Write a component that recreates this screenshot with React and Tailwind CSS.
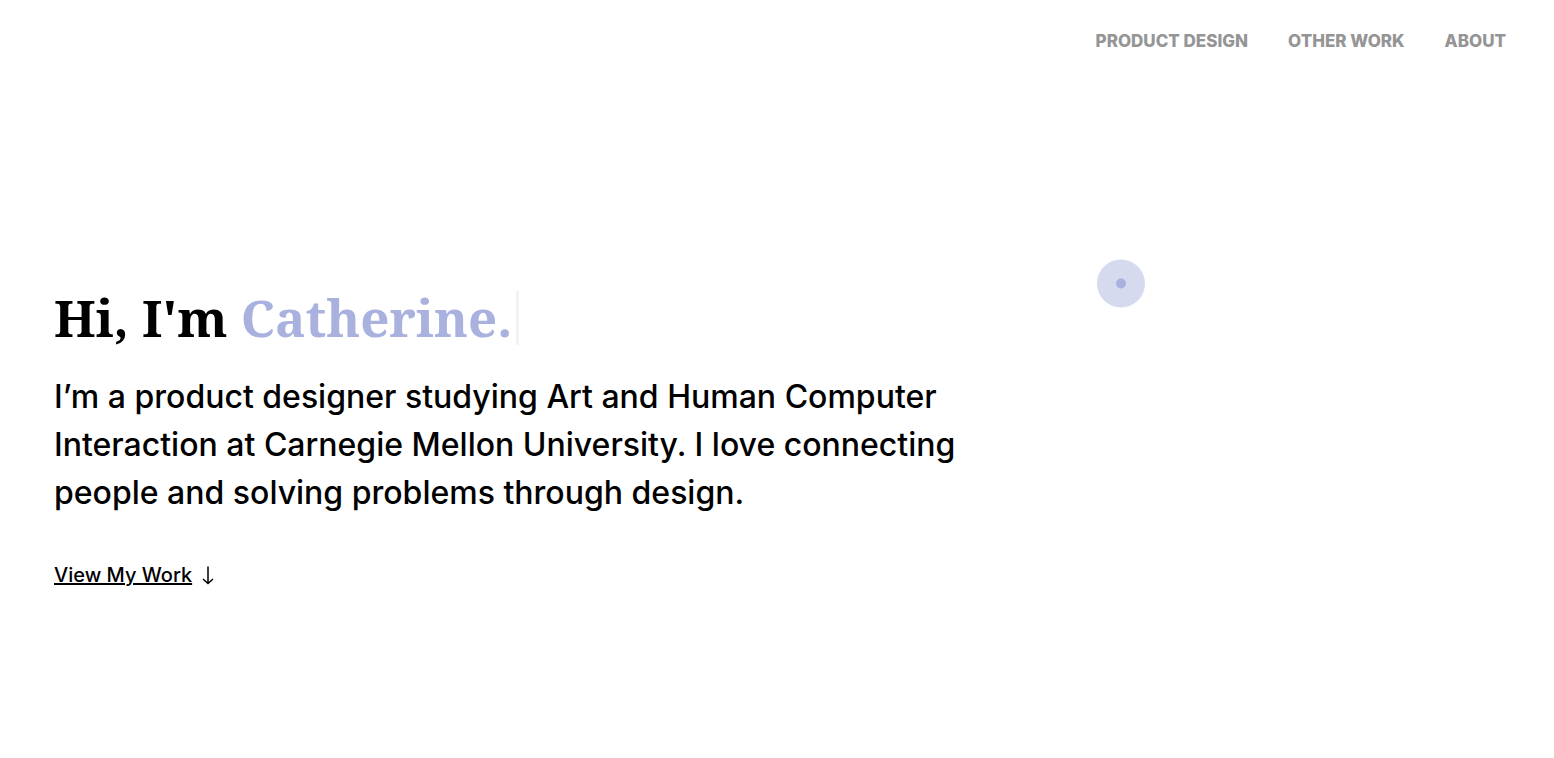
const navItems = [
  { label: 'PRODUCT DESIGN', href: '#product-design' },
  { label: 'OTHER WORK', href: '#other-work' },
  { label: 'ABOUT', href: '#about' },
];

export default function App() {
  return (
    <div className="relative min-h-screen bg-white font-['Inter','Liberation_Sans',sans-serif] text-black">
      <header className="flex justify-end px-12 pt-[29px]">
        <nav className="flex gap-10 text-[17px] leading-6 font-extrabold text-[#959595]">
          {navItems.map((item) => (
            <a key={item.href} href={item.href}>{item.label}</a>
          ))}
        </nav>
      </header>

      <main className="px-[54px] pt-[238px]">
        <h1 className="flex items-start font-['Noto_Serif','Liberation_Serif',serif] text-[51px] leading-[52px] font-bold">
          <span>Hi, I'm <span className="text-[#a9b1df]">Catherine.</span></span>
          <span className="ml-1 h-[54px] w-[3px] bg-[#f3f3f4]" aria-hidden="true" />
        </h1>
        <p className="mt-7 max-w-[920px] text-[32px] leading-12 font-medium">
          I’m a product designer studying Art and Human Computer Interaction at Carnegie Mellon University. I love connecting people and solving problems through design.
        </p>
        <a href="#work" className="mt-11 inline-flex items-center gap-2.5 text-xl leading-7 font-medium">
          <span className="underline decoration-2">View My Work</span>
          <svg width="12" height="20" viewBox="0 0 12 20" fill="none" stroke="currentColor" strokeWidth="1.5" aria-hidden="true">
            <path d="M6 1.5v17M1 14l5 4.6 5-4.6" />
          </svg>
        </a>
      </main>

      <svg className="pointer-events-none absolute top-[259px] left-[1097px]" width="49" height="49" viewBox="0 0 49 49" aria-hidden="true">
        <circle cx="24" cy="24.5" r="24" fill="#d6daef" />
        <circle cx="24" cy="24.5" r="5" fill="#a9b1df" />
      </svg>
    </div>
  );
}
